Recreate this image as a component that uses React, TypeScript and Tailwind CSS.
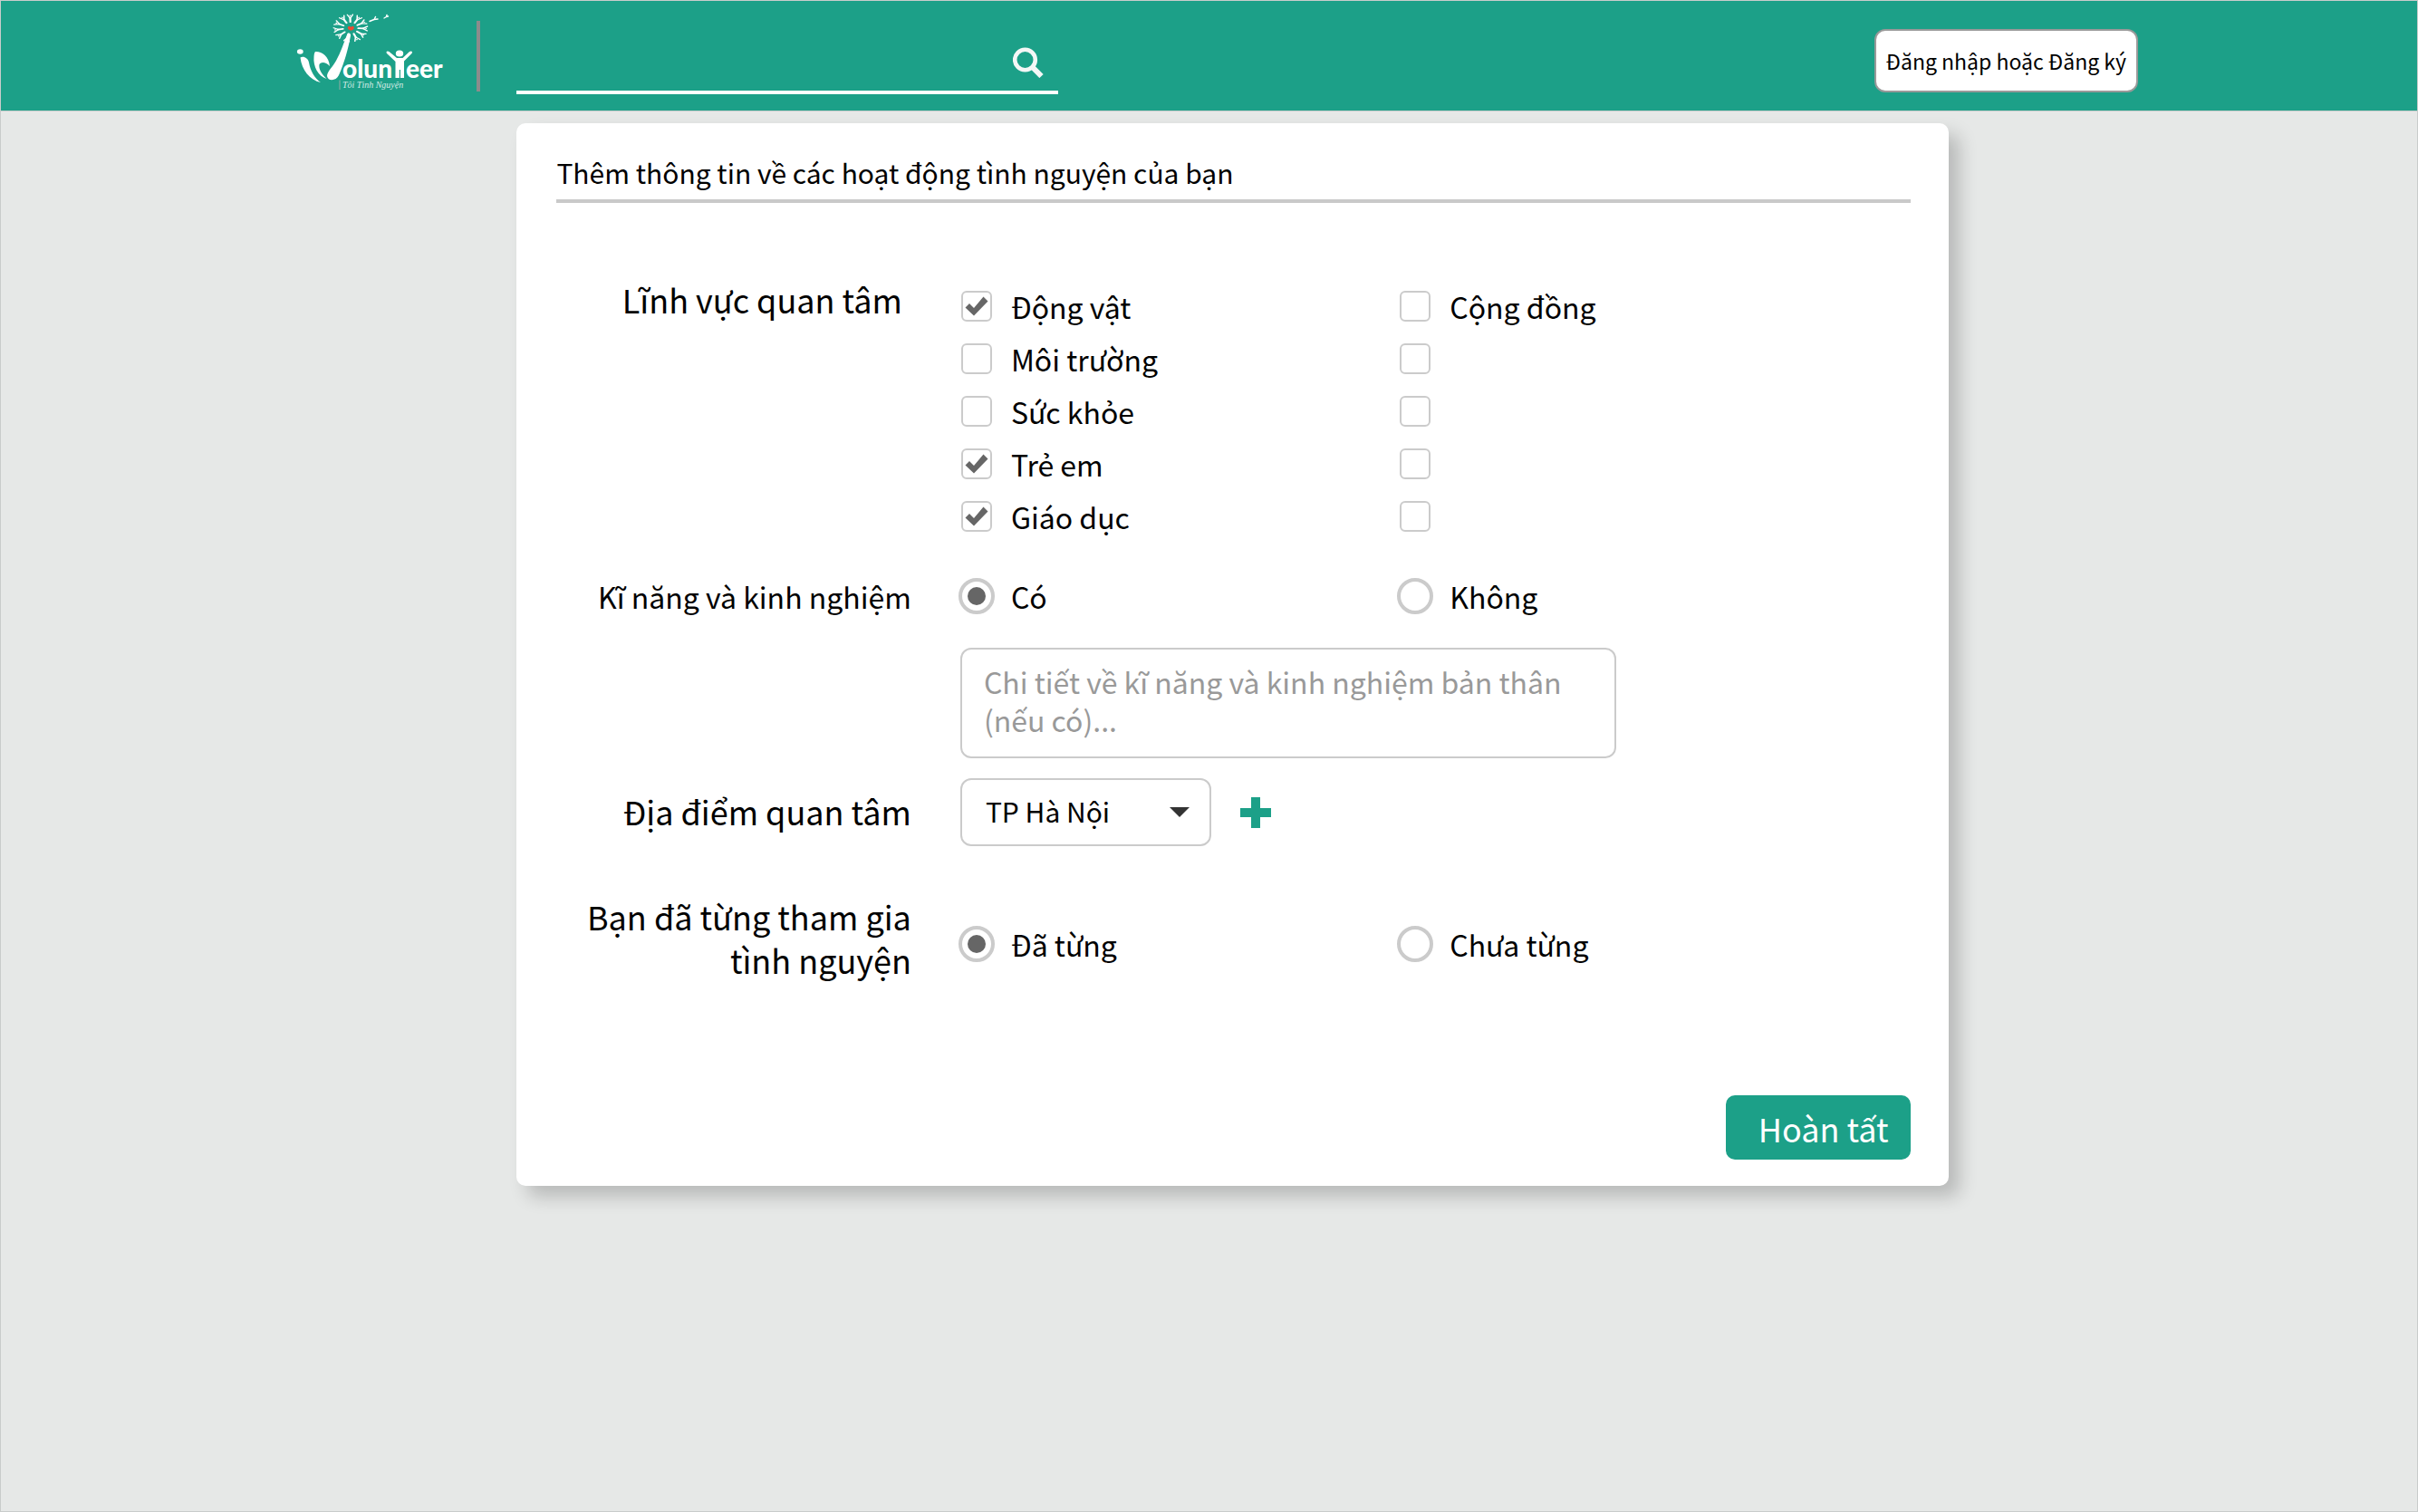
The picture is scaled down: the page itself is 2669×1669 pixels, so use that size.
import React from 'react';

const seedAngles = [-92, -58, -28, 2, 34, 66, 104, 140, 172, 204, 238];

function Logo() {
  return (
    <svg viewBox="326 13 168 97" className="h-[97px] w-[168px] shrink-0" role="img" aria-label="iVolunteer – Tôi Tình Nguyện">
      <g fill="#fff">
        <ellipse cx="331.3" cy="57" rx="3.4" ry="2.8" />
        <path d="M331.5 63.5C335 61.500 340 64 341 69C342.500 78 347 86 354 91C342 88.500 333 77 331.500 63.500Z" />
        <path d="M348 57C355 56.500 363 62 364 73C360 68.500 354.500 67.500 352.500 71C351.500 76 355 82 360.500 87C351 84 345.500 73 346.500 63C346.700 60 347 58 348 57Z" />
        <path d="M383.500 37C385.500 36 387.300 37 387 39.500C384.500 53 380 70 374 83C371 89.500 362 90 361 84C361 79 367 74 371 67C376 58 379.500 47 383.500 37Z" />
        <ellipse cx="441" cy="59" rx="4.200" ry="3.500" />
        <path d="M436.500 86V68L427 59C425.500 57 427.500 55.500 429.500 57L438 64H444.500L452 57C454 55.500 456 57 454.500 59L446 67.500V86H442V77H440.800V86Z" />
      </g>
      <g stroke="#fff" fill="none" strokeLinecap="round">
        {seedAngles.map((angle) => (
          <g key={angle} transform={`translate(387 31) scale(1 0.8) rotate(${angle})`}>
            <path d="M8.500 0H14" strokeWidth="2.200" />
            <path d="M13.500 0L18.500 -3M13.500 0L18.500 3" strokeWidth="1.500" />
            <circle cx="17" cy="0" r="0.600" fill="#fff" strokeWidth="0.500" />
          </g>
        ))}
        <path d="M408 23.500L413 21.500M413 21.500L414.500 18.500M413 21.500L417 21M424 20L426.500 18.500M426.500 18.500L427 16.500M426.500 18.500L428.500 18" strokeWidth="1.400" />
      </g>
      <path d="M387.300 33.800C384.500 33 383.300 31.500 384 29.800C385 28.600 386.500 29 387.300 29.900C388.500 28.600 390.300 29 390.800 30.200C391 31.800 389.500 33.400 387.300 33.800Z" fill="#f04a32" />
      <text x="378" y="86" fill="#fff" fontSize="28" fontWeight="900" fontFamily="Lato, sans-serif">olun</text>
      <text x="448" y="86" fill="#fff" fontSize="28" fontWeight="900" fontFamily="Lato, sans-serif">eer</text>
      <path d="M375 88.500V99" stroke="#6fa79b" strokeWidth="1.500" />
      <text x="378" y="97" fill="#d5ece7" fontSize="10" fontStyle="italic" fontFamily="'Liberation Serif', serif">Tôi Tình Nguyện</text>
    </svg>
  );
}

function Check({ label, name, checked }: { label?: string; name: string; checked?: boolean }) {
  return (
    <label className="flex h-[58px] items-center gap-[18px]">
      <span className="grid w-10 shrink-0 place-items-center">
        <input
          type="checkbox"
          name={name}
          defaultChecked={checked}
          aria-label={label ?? 'Lĩnh vực khác'}
          className="peer col-start-1 row-start-1 size-[34px] appearance-none rounded-md border-2 border-[#cbcbcb] bg-white"
        />
        <svg viewBox="0 0 26 22" className="pointer-events-none invisible col-start-1 row-start-1 h-[22px] w-[26px] peer-checked:visible" aria-hidden="true">
          <path d="M0.500 12.500L5 8L10 13L20.500 0.500L25.500 5.500L10 21.500Z" fill="#666" />
        </svg>
      </span>
      {label && <span>{label}</span>}
    </label>
  );
}

function Radio({ label, name, checked }: { label: string; name: string; checked?: boolean }) {
  return (
    <label className="flex h-[58px] items-center gap-[18px]">
      <span className="grid shrink-0 place-items-center">
        <input
          type="radio"
          name={name}
          defaultChecked={checked}
          className="peer col-start-1 row-start-1 size-10 appearance-none rounded-full border-4 border-[#cbcbcb] bg-white"
        />
        <span className="pointer-events-none invisible col-start-1 row-start-1 size-5 rounded-full bg-[#666] peer-checked:visible" />
      </span>
      <span>{label}</span>
    </label>
  );
}

const labelCol = 'w-[26.2%] shrink-0 text-right';
const optionGrid = 'grid grid-cols-[485fr_567fr]';

export default function App() {
  return (
    <div className="min-h-screen border border-[#c9cccb] bg-[#e6e8e7] font-['Noto_Sans_CJK_SC','Noto_Sans',sans-serif] text-black">
      <header className="flex h-[122px] items-center border-b border-[#c9cccb] bg-[#1ca088] pr-[11.55%] pl-[12.2%]">
        <a href="#" className="shrink-0"><Logo /></a>
        <div className="ml-8 h-[78px] w-1 shrink-0 bg-[#8c8c8c]" />
        <form role="search" className="mb-[18px] ml-10 flex w-[29.4%] items-end self-end border-b-4 border-white pr-4 pb-[14px]">
          <input type="search" aria-label="Tìm kiếm" className="h-[42px] min-w-0 flex-1 bg-transparent text-[29px] text-white outline-none" />
          <button type="button" aria-label="Tìm kiếm">
            <svg viewBox="0 0 34 34" className="size-[34px]" fill="none" stroke="#f4f7f6">
              <circle cx="13.500" cy="14" r="11.300" strokeWidth="4.600" />
              <path d="M21.500 22L31.500 32" strokeWidth="6" />
            </svg>
          </button>
        </form>
        <button type="button" className="mt-[10px] ml-auto h-[70px] rounded-xl border-2 border-[#999] bg-white px-[11px] text-[23px] leading-8 whitespace-nowrap">
          Đăng nhập hoặc Đăng ký
        </button>
      </header>

      <main className="pt-[13px] pr-[19.4%] pl-[21.35%]">
        <form className="rounded-[10px] bg-white pt-[34px] pr-[42px] pb-[29px] pl-11 shadow-[12px_12px_20px_rgba(0,0,0,0.2)]">
          <h1 className="border-b-4 border-[#c9c9c9] pb-[10px] text-3xl leading-10">
            Thêm thông tin về các hoạt động tình nguyện của bạn
          </h1>

          <div className="pt-[82px] text-[32px] leading-[42px]">
            <div role="group" aria-labelledby="fields-label" className="flex gap-[52px]">
              <div id="fields-label" className={`${labelCol} pr-[10px] text-4xl leading-12`}>Lĩnh vực quan tâm</div>
              <div className={`${optionGrid} flex-1 pt-[3px]`}>
                <div>
                  <Check name="animals" label="Động vật" checked />
                  <Check name="environment" label="Môi trường" />
                  <Check name="health" label="Sức khỏe" />
                  <Check name="children" label="Trẻ em" checked />
                  <Check name="education" label="Giáo dục" checked />
                </div>
                <div>
                  <Check name="community" label="Cộng đồng" />
                  <Check name="other1" />
                  <Check name="other2" />
                  <Check name="other3" />
                  <Check name="other4" />
                </div>
              </div>
            </div>

            <div role="radiogroup" aria-labelledby="skills-label" className="mt-[30px] flex items-center gap-[52px]">
              <div id="skills-label" className={labelCol}>Kĩ năng và kinh nghiệm</div>
              <div className={`${optionGrid} flex-1`}>
                <Radio name="skills" label="Có" checked />
                <Radio name="skills" label="Không" />
              </div>
            </div>

            <div className="mt-7 flex gap-[52px]">
              <div className={labelCol} />
              <div className="flex flex-1 pl-0.5">
                <textarea
                  rows={2}
                  aria-label="Chi tiết về kĩ năng và kinh nghiệm bản thân"
                  placeholder="Chi tiết về kĩ năng và kinh nghiệm bản thân (nếu có)..."
                  className="h-[122px] w-[69%] resize-none rounded-xl border-2 border-[#cbcbcb] bg-white px-6 pt-[14px] leading-[42px] outline-none placeholder:text-[#999] placeholder:opacity-100"
                />
              </div>
            </div>

            <div className="mt-[22px] flex items-center gap-[52px]">
              <label htmlFor="place" className={`${labelCol} pb-1 text-4xl leading-12`}>Địa điểm quan tâm</label>
              <div className="flex flex-1 items-center gap-8 pl-0.5">
                <div className="relative">
                  <select id="place" className="h-[75px] w-[277px] appearance-none rounded-xl border-2 border-[#cbcbcb] bg-white pb-1 pl-[26px] text-3xl leading-10">
                    <option>TP Hà Nội</option>
                  </select>
                  <svg viewBox="0 0 22 11" className="pointer-events-none absolute top-8 right-6 h-[11px] w-[22px]" aria-hidden="true">
                    <path d="M0 0H22L11 11Z" fill="#333" />
                  </svg>
                </div>
                <button type="button" aria-label="Thêm địa điểm">
                  <svg viewBox="0 0 34 34" className="size-[34px]" aria-hidden="true">
                    <path d="M12 0H22V12H34V22H22V34H12V22H0V12H12Z" fill="#1ca088" />
                  </svg>
                </button>
              </div>
            </div>

            <div role="radiogroup" aria-labelledby="joined-label" className="mt-[53px] flex gap-[52px]">
              <div id="joined-label" className={`${labelCol} text-4xl leading-12`}>
                Bạn đã từng tham gia<br />tình nguyện
              </div>
              <div className={`${optionGrid} flex-1 pt-[26px]`}>
                <Radio name="joined" label="Đã từng" checked />
                <Radio name="joined" label="Chưa từng" />
              </div>
            </div>
          </div>

          <div className="mt-[126px] flex justify-end">
            <button type="submit" className="h-[71px] rounded-[10px] bg-[#1ca088] pr-6 pl-9 text-4xl leading-12 text-white">
              Hoàn tất
            </button>
          </div>
        </form>
      </main>
    </div>
  );
}
